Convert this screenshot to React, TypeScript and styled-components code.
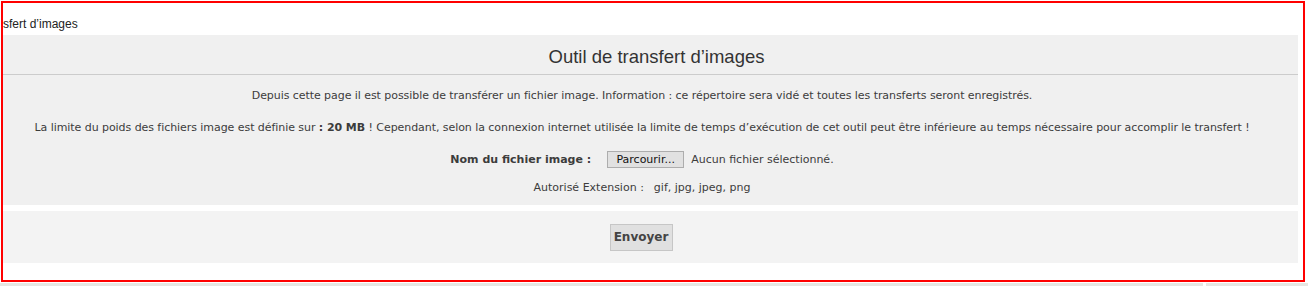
import styled, { createGlobalStyle } from 'styled-components';

const GlobalStyle = createGlobalStyle`
  html, body {
    margin: 0;
    padding: 0;
    background: #ffffff;
  }
  body {
    font-family: "DejaVu Sans", Verdana, sans-serif;
    font-size: 11px;
    color: #3c3c3c;
  }
`;

const Frame = styled.div`
  margin: 1px 0 0 1px;
  width: 1300px;
  height: 277px;
  border: 2px solid #ff0000;
  overflow: hidden;
  display: flex;
  flex-direction: column;
`;

const Crumb = styled.div`
  height: 32px;
  line-height: 42px;
  font-family: "Liberation Sans", Arial, sans-serif;
  font-size: 12px;
  color: #222;
  white-space: nowrap;
`;

const Panel = styled.div<{ $tone: string }>`
  background: ${(p) => p.$tone};
  margin-right: 5px;
  display: flex;
  flex-direction: column;
  align-items: stretch;
`;

const Title = styled.h1`
  margin: 0;
  height: 39px;
  padding-left: 12px;
  line-height: 44px;
  border-bottom: 1px solid #cccccc;
  text-align: center;
  font-family: "Liberation Sans", Arial, sans-serif;
  font-weight: normal;
  font-size: 18.5px;
  color: #333;
`;

const Body = styled.div`
  box-sizing: border-box;
  padding: 13px 17px 5px 0;
  display: flex;
  flex-direction: column;
  align-items: center;
  height: 130px;
`;

const Para = styled.p<{ $h: number }>`
  margin: 0;
  height: ${(p) => p.$h}px;
  line-height: 15px;
  text-align: center;
  white-space: nowrap;
  letter-spacing: -0.06px;
`;

const Row = styled.div<{ $h: number }>`
  display: flex;
  align-items: center;
  height: ${(p) => p.$h}px;
  gap: 6px;
`;

const Label = styled.span<{ $bold?: boolean }>`
  font-weight: ${(p) => (p.$bold ? 'bold' : 'normal')};
  margin-right: ${(p) => (p.$bold ? 10 : 4)}px;
`;

const FileButton = styled.button`
  font: inherit;
  color: #111;
  background: #e1e1e1;
  border: 1px solid #adadad;
  height: 17px;
  width: 77px;
  padding: 0;
  margin-right: 1px;
`;

const Gap = styled.div`
  height: 6px;
`;

const SendArea = styled.div`
  height: 52px;
  padding-right: 19px;
  display: flex;
  align-items: center;
  justify-content: center;
`;

const SendButton = styled.button`
  font-family: "DejaVu Sans", Verdana, sans-serif;
  font-weight: bold;
  font-size: 12px;
  color: #444;
  background: #e0e0e0;
  border: 1px solid #c6c6c6;
  width: 63px;
  height: 27px;
  padding: 0;
`;

const Under = styled.div`
  display: flex;
  gap: 3px;
  height: 3px;
  margin-top: 1px;
`;

const UnderBlock = styled.div<{ $w: number }>`
  width: ${(p) => p.$w}px;
  background: #e6e6e2;
`;

export default function App() {
  return (
    <>
      <GlobalStyle />
      <Frame>
        <Crumb>sfert d’images</Crumb>
        <Panel $tone="#f0f0f0">
          <Title>Outil de transfert d’images</Title>
          <Body>
            <Para $h={32}>
              Depuis cette page il est possible de transférer un fichier image. Information : ce répertoire sera vidé et toutes les transferts seront enregistrés.
            </Para>
            <Para $h={24}>
              La limite du poids des fichiers image est définie sur <b>: 20 MB</b> ! Cependant, selon la connexion internet utilisée la limite de temps d’exécution de cet outil peut être inférieure au temps nécessaire pour accomplir le transfert !
            </Para>
            <Row $h={30}>
              <Label $bold>Nom du fichier image :</Label>
              <FileButton type="button">Parcourir...</FileButton>
              <span>Aucun fichier sélectionné.</span>
            </Row>
            <Row $h={26}>
              <Label>Autorisé Extension :</Label>
              <span>gif, jpg, jpeg, png</span>
            </Row>
          </Body>
        </Panel>
        <Gap />
        <Panel $tone="#f3f3f3">
          <SendArea>
            <SendButton type="submit">Envoyer</SendButton>
          </SendArea>
        </Panel>
      </Frame>
      <Under>
        <UnderBlock $w={1203} />
        <UnderBlock $w={102} />
      </Under>
    </>
  );
}
